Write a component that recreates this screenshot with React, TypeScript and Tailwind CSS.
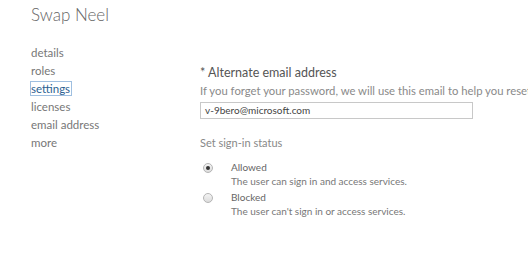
const navItems = ["details", "roles", "settings", "licenses", "email address", "more"];

function Radio({ checked }: { checked: boolean }) {
  return (
    <span className="mt-[3px] flex h-[10px] w-[10px] shrink-0 items-center justify-center rounded-full border border-[#b5b5b5] bg-gradient-to-b from-[#f4f4f4] to-[#dcdcdc]">
      {checked && <span className="h-[4px] w-[4px] rounded-full bg-[#333]" />}
    </span>
  );
}

export default function App() {
  return (
    <div className="h-[258px] w-[528px] overflow-hidden bg-white pl-[31px] pt-[3px] font-['Lato',sans-serif] text-[#777]">
      <h1 className="text-[17px] font-light leading-[24px] text-[#666]">Swap Neel</h1>

      <div className="mt-[17px] flex">
        <nav className="w-[169px] shrink-0 text-[11.5px] leading-[18px]">
          {navItems.map((item) =>
            item === "settings" ? (
              <div key={item}>
                <span className="-ml-[1px] border border-[#9fbfe0] pr-[1px] text-[#2c5f91]">{item}</span>
              </div>
            ) : (
              <div key={item}>{item}</div>
            )
          )}
        </nav>

        <div className="min-w-0 flex-1 overflow-hidden pt-[20px]">
          <div className="text-[12.5px] leading-[18px] text-[#555]">* Alternate email address</div>
          <div className="whitespace-nowrap text-[11.3px] leading-[17px] text-[#8a8a8a]">
            If you forget your password, we will use this email to help you reset it.
          </div>
          <div className="mt-[3px] flex h-[17px] w-[273px] items-center border border-[#c8c8c8] px-[4px] text-[10px] text-[#444]">
            v-9bero@microsoft.com
          </div>

          <div className="mt-[15px] text-[11px] leading-[17px] text-[#888]">Set sign-in status</div>

          <div className="mt-[9px] flex flex-col gap-[2px] text-[10px] leading-[14px]">
            <div className="flex">
              <div className="w-[31px] pl-[3px]">
                <Radio checked />
              </div>
              <div>
                <div className="text-[#666]">Allowed</div>
                <div className="text-[#777]">The user can sign in and access services.</div>
              </div>
            </div>
            <div className="flex">
              <div className="w-[31px] pl-[3px]">
                <Radio checked={false} />
              </div>
              <div>
                <div className="text-[#666]">Blocked</div>
                <div className="text-[#777]">The user can't sign in or access services.</div>
              </div>
            </div>
          </div>
        </div>
      </div>
    </div>
  );
}
